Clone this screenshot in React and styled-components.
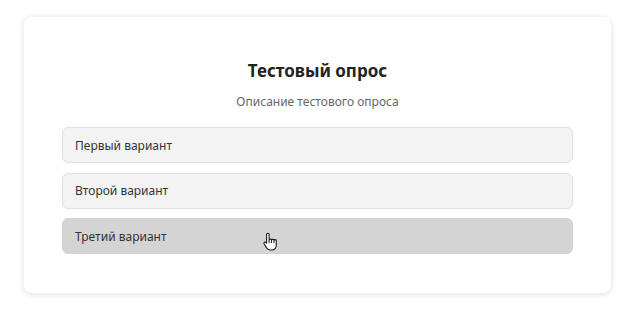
import React from "react";
import styled, { createGlobalStyle } from "styled-components";

const Global = createGlobalStyle`
  html, body { margin: 0; padding: 0; background: #ffffff; }
  body { font-family: "Noto Sans", "Open Sans", sans-serif; }
`;

const Page = styled.div`
  padding: 17px 25px 26px 24px;
`;

const Card = styled.div`
  background: #fff;
  border-radius: 8px;
  box-shadow: 0 1px 6px rgba(0, 0, 0, 0.14);
  padding: 40px 38px 39px 38px;
  display: flex;
  flex-direction: column;
  align-items: stretch;
`;

const Title = styled.h1`
  margin: 0;
  font-size: 17px;
  font-weight: 700;
  color: #222;
  text-align: center;
  line-height: 28px;
`;

const Description = styled.p`
  margin: 8px 0 16px;
  font-size: 12px;
  color: #666;
  text-align: center;
  line-height: 18px;
`;

const Options = styled.div`
  display: flex;
  flex-direction: column;
  gap: 9.5px;
`;

const Option = styled.div`
  position: relative;
  height: 36px;
  box-sizing: border-box;
  display: flex;
  align-items: center;
  padding: 0 12px;
  border-radius: 6px;
  border: 1px solid ${(p) => (p.$hover ? "#d4d4d4" : "#e2e2e2")};
  background: ${(p) => (p.$hover ? "#d4d4d4" : "#f3f3f3")};
  font-size: 12px;
  color: #333;
`;

const Cursor = styled.svg`
  position: absolute;
  left: 200px;
  top: 13px;
`;

const HandCursor = () => (
  <Cursor width="15" height="19" viewBox="0 0 14 18">
    <path
      d="M4.5 1.2c.7 0 1.2.5 1.2 1.2v5.2c.2-.6.7-.9 1.2-.9.6 0 1 .4 1.1.9.2-.5.6-.8 1.1-.8.6 0 1.1.4 1.2 1 .2-.4.6-.6 1-.6.7 0 1.2.5 1.2 1.2v3.6c0 2.8-1.7 5-4.6 5H6.6c-1.4 0-2.3-.6-3.1-1.7L1 11.3c-.4-.6-.2-1.3.3-1.6.5-.3 1.1-.2 1.5.3l.5.7V2.4c0-.7.5-1.2 1.2-1.2z"
      fill="#fff"
      stroke="#111"
      strokeWidth="1"
      strokeLinejoin="round"
    />
    <path d="M5.7 7.6v3M8 7.5v3M10.3 7.8v2.8" stroke="#111" strokeWidth="0.9" />
  </Cursor>
);

const options = ["Первый вариант", "Второй вариант", "Третий вариант"];

export default function App() {
  return (
    <>
      <Global />
      <Page>
        <Card>
          <Title>Тестовый опрос</Title>
          <Description>Описание тестового опроса</Description>
          <Options>
            {options.map((o, i) => (
              <Option key={o} $hover={i === 2}>
                {o}
                {i === 2 && <HandCursor />}
              </Option>
            ))}
          </Options>
        </Card>
      </Page>
    </>
  );
}
